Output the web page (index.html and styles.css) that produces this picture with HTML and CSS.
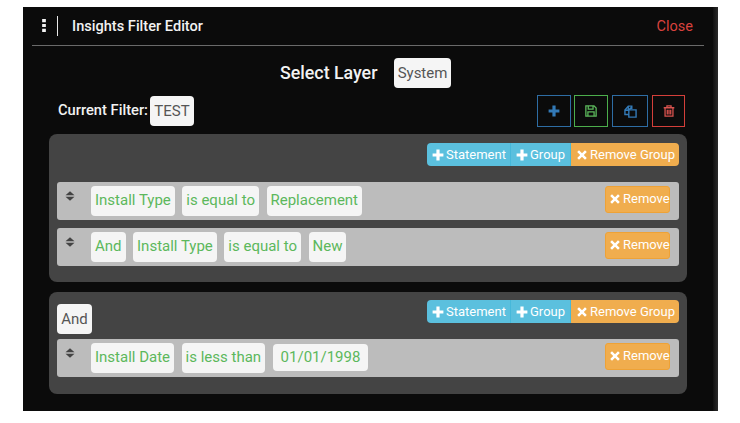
FILE: index.html
```html
<!DOCTYPE html>
<html lang="en">
<head>
<meta charset="utf-8">
<title>Insights Filter Editor</title>
<link rel="stylesheet" href="styles.css">
</head>
<body>
<svg class="defs" width="0" height="0" aria-hidden="true">
  <symbol id="i-plus" viewBox="0 0 12 12"><path d="M4.4 0.6h3.2v3.8h3.8v3.2H7.6v3.8H4.4V7.6H0.6V4.4h3.8z"/></symbol>
  <symbol id="i-x" viewBox="0 0 12 12"><path d="M3 1.2 6 4.2 9 1.2 10.8 3 7.8 6 10.8 9 9 10.8 6 7.8 3 10.8 1.2 9 4.2 6 1.2 3z"/></symbol>
  <symbol id="i-sort" viewBox="0 0 12 14"><path d="M6 1.2 11.4 6.2H0.6zM0.6 7.8H11.4L6 12.8z"/></symbol>
</svg>
<main class="panel">
  <header class="head">
    <svg class="kebab" viewBox="0 0 4 14"><path d="M0 0h4v3.4H0zM0 5.3h4v3.4H0zM0 10.6h4V14H0z"/></svg>
    <span class="divider"></span>
    <h1 class="title">Insights Filter Editor</h1>
    <span class="close">Close</span>
  </header>
  <div class="layer">
    <span class="layer-label">Select Layer</span>
    <span class="chip chip-plain chip-system">System</span>
  </div>
  <div class="current">
    <span class="current-label">Current Filter:</span>
    <span class="chip chip-plain chip-test">TEST</span>
    <div class="actions">
      <span class="act act-blue act-plus"><svg class="act-icon" viewBox="0 0 12 12"><use href="#i-plus"/></svg></span>
      <span class="act act-green act-save"><svg class="act-icon" viewBox="0 0 14 14"><path class="line" d="M1 1h9.5L13 3.5V13H1zM3.8 1.2v3.6h5.6V1.2M3.4 13V8h7.2v5"/></svg></span>
      <span class="act act-blue act-copy"><svg class="act-icon act-icon-wide" viewBox="0 0 14 14"><path class="line" d="M5.2 10.2H1V5.4L4.6 1.2H8.4V4.2M5.2 5.2 8.4 2.2M5.2 5.2H13V13H5.2zM1 5.6H4.6V1.6"/></svg></span>
      <span class="act act-red act-trash"><svg class="act-icon" viewBox="0 0 14 14"><path class="line" d="M0.8 3.2H13.2M4.6 3V1H9.4V3M2.4 3.2V13H11.6V3.2M5 5.4V11M7 5.4V11M9 5.4V11"/></svg></span>
    </div>
  </div>

  <section class="group group-first">
    <div class="group-top">
      <div class="btns">
        <span class="btn btn-info btn-statement"><svg class="ic"><use href="#i-plus"/></svg>Statement</span>
        <span class="btn btn-info btn-group"><svg class="ic"><use href="#i-plus"/></svg>Group</span>
        <span class="btn btn-warn btn-rgroup"><svg class="ic"><use href="#i-x"/></svg>Remove Group</span>
      </div>
    </div>
    <div class="row">
      <svg class="sort"><use href="#i-sort"/></svg>
      <span class="chip chip-val">Install Type</span>
      <span class="chip chip-val">is equal to</span>
      <span class="chip chip-val">Replacement</span>
      <span class="btn btn-warn btn-remove"><svg class="ic"><use href="#i-x"/></svg>Remove</span>
    </div>
    <div class="row">
      <svg class="sort"><use href="#i-sort"/></svg>
      <span class="chip chip-val">And</span>
      <span class="chip chip-val">Install Type</span>
      <span class="chip chip-val">is equal to</span>
      <span class="chip chip-val">New</span>
      <span class="btn btn-warn btn-remove"><svg class="ic"><use href="#i-x"/></svg>Remove</span>
    </div>
  </section>

  <section class="group group-second">
    <div class="group-top group-top-and">
      <span class="chip chip-plain chip-and">And</span>
      <div class="btns">
        <span class="btn btn-info btn-statement"><svg class="ic"><use href="#i-plus"/></svg>Statement</span>
        <span class="btn btn-info btn-group"><svg class="ic"><use href="#i-plus"/></svg>Group</span>
        <span class="btn btn-warn btn-rgroup"><svg class="ic"><use href="#i-x"/></svg>Remove Group</span>
      </div>
    </div>
    <div class="row">
      <svg class="sort"><use href="#i-sort"/></svg>
      <span class="chip chip-val">Install Date</span>
      <span class="chip chip-val">is less than</span>
      <span class="chip chip-val chip-date">01/01/1998</span>
      <span class="btn btn-warn btn-remove"><svg class="ic"><use href="#i-x"/></svg>Remove</span>
    </div>
  </section>
</main>
</body>
</html>
```
FILE: styles.css
```css
* { box-sizing: border-box; }
html, body { margin: 0; height: 100%; background: #fff; }
body {
  padding: 7px 22px 12px 23px;
  font-family: Roboto, "Liberation Sans", sans-serif;
  overflow: hidden;
}
.defs { display: block; height: 0; }
.panel {
  height: 404px;
  background: linear-gradient(90deg, #0b0b0b 0, #0b0b0b 690px, #111 690px, #2a2a2a 695px);
  padding: 0 14px 0 9px;
  display: flex;
  flex-direction: column;
}
.head {
  height: 39px;
  flex: none;
  border-bottom: 1px solid #6a6a6a;
  display: flex;
  align-items: center;
  padding: 0 11px 0 10px;
}
.kebab { width: 4px; height: 13px; margin-top: -1px; fill: #f4f4f4; }
.divider { width: 1px; height: 20px; background: #e8e8e8; margin-left: 11px; }
.title { margin: 0 0 0 14px; font-size: 14.6px; font-weight: 500; color: #f2f2f2; }
.close { margin-left: auto; font-size: 14.5px; color: #d9423e; }

.layer {
  flex: none;
  display: flex;
  align-items: center;
  height: 30px;
  margin-top: 12px;
  padding-left: 248px;
}
.layer-label { font-size: 17.8px; font-weight: 500; color: #f2f2f2; width: 114px; padding-bottom: 2px; }

.chip {
  display: inline-flex;
  align-items: center;
  justify-content: center;
  height: 30px;
  padding: 0 4px 3px;
  font-size: 15px;
  background: #f5f5f5;
  border-radius: 4px;
  flex: none;
}
.chip-plain { color: #555; padding-bottom: 1px; }
.chip-system { width: 57px; }
.chip-test { width: 44px; }
.chip-val { color: #5cb85c; margin-right: 7.5px; }
.chip-date { height: 27px; padding: 0 8px 1px; }
.chip-and { width: 35px; }

.current {
  flex: none;
  display: flex;
  align-items: center;
  height: 32px;
  margin-top: 7px;
  padding-left: 26px;
  padding-right: 19px;
}
.current-label { font-size: 14.7px; font-weight: 500; color: #f2f2f2; width: 92px; padding-bottom: 2px; }
.actions { margin-left: auto; display: flex; }
.act {
  height: 32px;
  border: 1px solid;
  display: flex;
  align-items: center;
  justify-content: center;
}
.act-icon { width: 12px; height: 12px; }
.act-icon-wide { width: 13px; height: 13px; }
.act-blue { border-color: #2e6da4; color: #337ab7; }
.act-green { border-color: #4cae4c; color: #5cb85c; }
.act-red { border-color: #d43f3a; color: #d9534f; }
.act-plus { width: 34px; margin-right: 3px; }
.act-save { width: 34px; margin-right: 4px; }
.act-copy { width: 36px; margin-right: 4px; }
.act-trash { width: 33px; }
.act-plus .act-icon { fill: currentColor; }
.line { fill: none; stroke: currentColor; stroke-width: 1.5; }

.group {
  flex: none;
  background: #444;
  border-radius: 8px;
  margin: 0 17px 0 17px;
  padding: 0 8px;
}
.group-first { height: 148px; margin-top: 7px; padding-top: 9px; }
.group-second { height: 102px; margin-top: 10px; padding-top: 8px; }
.group-top { display: flex; justify-content: flex-end; height: 39px; }
.group-top-and { justify-content: space-between; height: 39px; }
.chip-and { margin-top: 4px; }

.btns { display: flex; height: 23px; border-radius: 4px; overflow: hidden; }
.btn {
  display: inline-flex;
  align-items: center;
  font-size: 13px;
  font-weight: 400;
  color: #fff;
  padding: 0 5px;
  white-space: nowrap;
}
.btn-statement { width: 84px; }
.btn-group { width: 60px; }
.btn-rgroup { width: 108px; }
.btn-info { background: #5bc0de; border-right: 1px solid #46b8da; }
.btn-warn { background: #f0ad4e; }
.ic { width: 12px; height: 12px; fill: #fff; margin-right: 2px; flex: none; }

.row {
  display: flex;
  align-items: flex-start;
  height: 38px;
  margin-bottom: 8px;
  padding: 4px 9px 0 8px;
  background: #bcbcbc;
  border-radius: 3px;
}
.sort { width: 10px; height: 12px; fill: #444; margin: 4px 16px 0 0; flex: none; }
.row .chip-date { margin-top: 1px; }
.btn-remove {
  margin-left: auto;
  width: 65px;
  height: 27px;
  border-radius: 3px;
  border: 1px solid #eea236;
  padding: 0 3px 2px;
}
```
